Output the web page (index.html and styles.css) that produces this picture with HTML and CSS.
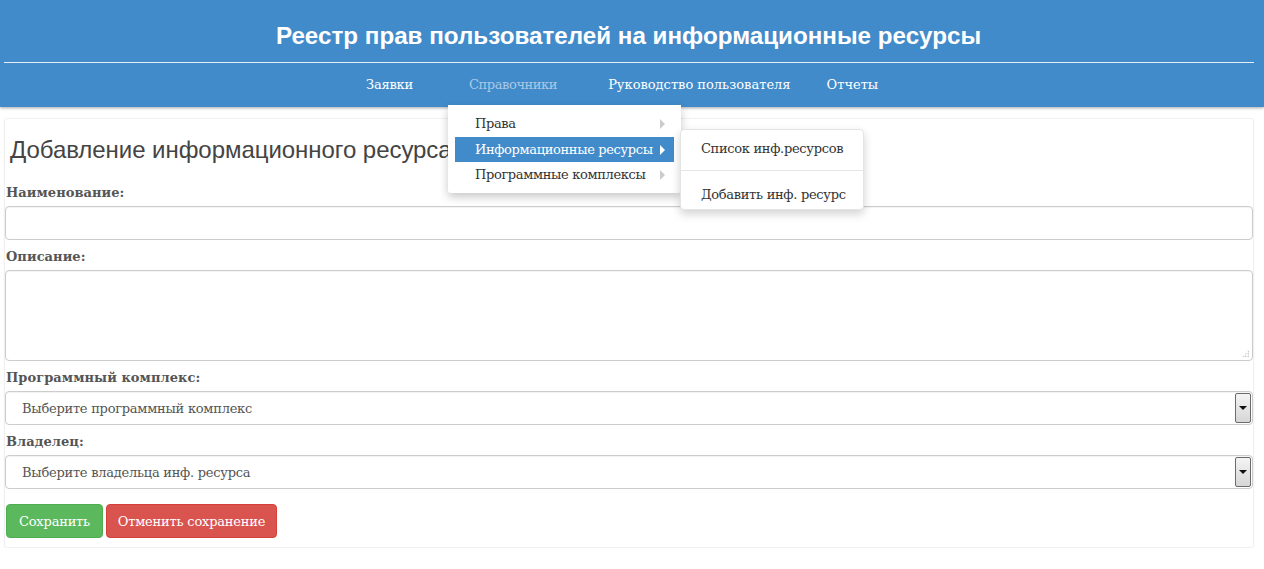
FILE: index.html
```html
<!DOCTYPE html>
<html lang="ru">
<head>
<meta charset="utf-8">
<title>Реестр прав пользователей</title>
<link rel="stylesheet" href="styles.css">
</head>
<body>
<header class="topbar">
  <h1 class="site-title">Реестр прав пользователей на информационные ресурсы</h1>
  <div class="rule"></div>
  <nav class="nav">
    <a class="nav-item nav-1" href="#">Заявки</a>
    <div class="nav-drop">
      <a class="nav-item nav-2 active" href="#">Справочники</a>
      <ul class="menu">
        <li class="menu-item has-sub">Права<span class="tri"></span></li>
        <li class="menu-item has-sub selected">Информационные ресурсы<span class="tri"></span>
          <ul class="submenu">
            <li class="sub-item">Список инф.ресурсов</li>
            <li class="sub-divider"></li>
            <li class="sub-item">Добавить инф. ресурс</li>
          </ul>
        </li>
        <li class="menu-item has-sub">Программные комплексы<span class="tri"></span></li>
      </ul>
    </div>
    <a class="nav-item nav-3" href="#">Руководство пользователя</a>
    <a class="nav-item nav-4" href="#">Отчеты</a>
  </nav>
</header>
<main class="panel">
  <h2 class="page-title">Добавление информационного ресурса</h2>
  <form class="form">
    <label class="label">Наименование:</label>
    <div class="input"></div>
    <label class="label">Описание:</label>
    <div class="textarea"><span class="grip"></span></div>
    <label class="label">Программный комплекс:</label>
    <div class="select"><span class="select-text">Выберите программный комплекс</span><span class="select-btn"><span class="arrow"></span></span></div>
    <label class="label">Владелец:</label>
    <div class="select"><span class="select-text">Выберите владельца инф. ресурса</span><span class="select-btn"><span class="arrow"></span></span></div>
    <div class="buttons">
      <button type="button" class="btn btn-save">Сохранить</button>
      <button type="button" class="btn btn-cancel">Отменить сохранение</button>
    </div>
  </form>
</main>
</body>
</html>
```

FILE: styles.css
```css
html, body {
  margin: 0;
  padding: 0;
  background: #fff;
}
body {
  font-family: "DejaVu Serif", serif;
  font-size: 13px;
  color: #333;
}
.topbar {
  background: #418bca;
  height: 107px;
  box-shadow: 0 1px 3px rgba(0,0,0,0.35);
  position: relative;
  z-index: 5;
}
.site-title {
  margin: 0;
  padding-top: 21px;
  height: 30px;
  line-height: 30px;
  text-align: center;
  color: #fff;
  font-family: "Liberation Sans", Arial, sans-serif;
  font-weight: bold;
  font-size: 24.2px;
  padding-right: 7px;
}
.rule {
  height: 1px;
  background: #e8eef5;
  margin: 11px 10px 0 4px;
}
.nav {
  display: flex;
  align-items: center;
  height: 44px;
  padding-left: 366px;
}
.nav-item {
  color: #fff;
  text-decoration: none;
  font-size: 13px;
  line-height: 20px;
  white-space: nowrap;
}
.nav-item.active {
  color: #a9c8e6;
  letter-spacing: -0.4px;
}
.nav-1 { margin-right: 56px; letter-spacing: -0.2px; }
.nav-2 { margin-right: 51px; }
.nav-3 { margin-right: 36px; }
.nav-drop {
  position: relative;
}
.menu {
  position: absolute;
  left: -21px;
  top: 30px;
  width: 233px;
  margin: 0;
  padding: 6px 7px 5px;
  box-sizing: border-box;
  list-style: none;
  background: #fff;
  border-radius: 0 0 3px 3px;
  box-shadow: 0 4px 10px rgba(0,0,0,0.22);
  color: #333;
  letter-spacing: -0.35px;
}
.menu-item {
  position: relative;
  height: 25.5px;
  line-height: 25px;
  padding-left: 20px;
  white-space: nowrap;
}
.menu-item.selected {
  background: #428bca;
  color: #fff;
}
.tri {
  position: absolute;
  right: 9px;
  top: 8px;
  width: 0;
  height: 0;
  border-top: 5px solid transparent;
  border-bottom: 5px solid transparent;
  border-left: 5px solid #ccc;
}
.selected .tri {
  right: 9px;
  border-left-color: #fff;
}
.submenu {
  position: absolute;
  left: 225px;
  top: -8px;
  width: 184px;
  height: 81px;
  box-sizing: border-box;
  margin: 0;
  padding: 5px 0 0;
  list-style: none;
  background: #fff;
  color: #333;
  border: 1px solid #e4e4e4;
  border-radius: 4px;
  box-shadow: 0 4px 10px rgba(0,0,0,0.18);
  letter-spacing: -0.3px;
}
.sub-item {
  height: 28px;
  line-height: 28px;
  padding-left: 20px;
  white-space: nowrap;
}
.sub-divider {
  height: 1px;
  background: #e5e5e5;
  margin: 7px 0 10px;
}
.panel {
  margin: 11px 10px 0 4px;
  height: 430px;
  border: 1px solid #f0f0f0;
  border-radius: 3px;
  box-shadow: 0 1px 2px rgba(0,0,0,0.06);
  padding: 0;
  box-sizing: border-box;
}
.page-title {
  margin: 0;
  padding: 16px 0 0 5px;
  height: 41px;
  line-height: 30px;
  font-family: "Liberation Sans", Arial, sans-serif;
  font-weight: normal;
  font-size: 24px;
  color: #444;
  letter-spacing: -0.05px;
}
.form {
  display: flex;
  flex-direction: column;
}
.label {
  display: block;
  font-weight: bold;
  color: #555;
  font-size: 13px;
  line-height: 18px;
  margin: 8px 0 4px 0;
  padding-left: 1px;
  letter-spacing: 0.05px;
}
.input, .textarea, .select {
  box-sizing: border-box;
  border: 1px solid #ccc;
  border-radius: 4px;
  background: #fff;
  box-shadow: inset 0 1px 1px rgba(0,0,0,0.05);
}
.input {
  height: 34px;
}
.textarea {
  height: 91px;
  position: relative;
}
.grip {
  position: absolute;
  right: 3px;
  bottom: 3px;
  width: 7px;
  height: 7px;
  background:
    radial-gradient(circle, #aaa 0.7px, transparent 0.9px) 0 0 / 2.5px 2.5px;
  clip-path: polygon(100% 0, 100% 100%, 0 100%);
}
.select {
  height: 34px;
  display: flex;
  align-items: center;
  justify-content: space-between;
  padding: 0 1px 0 16px;
}
.select-text {
  color: #555;
  font-size: 13px;
  letter-spacing: -0.25px;
}
.select-btn {
  width: 16px;
  height: 30px;
  box-sizing: border-box;
  border: 1px solid #6b6b6b;
  border-radius: 2px;
  background: linear-gradient(#f4f4f4, #d6d6d6);
  display: flex;
  align-items: center;
  justify-content: center;
}
.arrow {
  width: 0;
  height: 0;
  border-left: 4px solid transparent;
  border-right: 4px solid transparent;
  border-top: 4px solid #111;
}
.buttons {
  display: flex;
  gap: 3px;
  margin-top: 15px;
  padding-left: 1px;
}
.btn {
  height: 34px;
  border: 1px solid transparent;
  border-radius: 4px;
  color: #fff;
  font-family: "DejaVu Serif", serif;
  font-size: 13px;
  padding: 0;
  white-space: nowrap;
  letter-spacing: -0.2px;
}
.btn-save {
  background: #5cb85c;
  border-color: #4cae4c;
  width: 97px;
}
.btn-cancel {
  background: #d9534f;
  border-color: #d43f3a;
  width: 171px;
}
```
